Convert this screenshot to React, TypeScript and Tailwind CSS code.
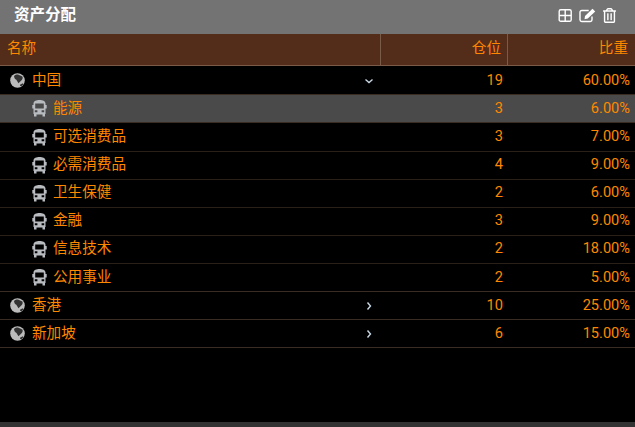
import { FaRegTrashAlt } from "react-icons/fa";

const rows = [
  { type: "group", name: "中国", pos: "19", pct: "60.00%", open: true },
  { type: "leaf", name: "能源", pos: "3", pct: "6.00%", active: true },
  { type: "leaf", name: "可选消费品", pos: "3", pct: "7.00%" },
  { type: "leaf", name: "必需消费品", pos: "4", pct: "9.00%" },
  { type: "leaf", name: "卫生保健", pos: "2", pct: "6.00%" },
  { type: "leaf", name: "金融", pos: "3", pct: "9.00%" },
  { type: "leaf", name: "信息技术", pos: "2", pct: "18.00%" },
  { type: "leaf", name: "公用事业", pos: "2", pct: "5.00%", last: true },
  { type: "group", name: "香港", pos: "10", pct: "25.00%" },
  { type: "group", name: "新加坡", pos: "6", pct: "15.00%" },
];

function Globe() {
  return (
    <svg width="15" height="15" viewBox="0 0 15 15" className="mr-[7px] shrink-0">
      <circle cx="7.500" cy="7.500" r="7.300" fill="#bcbcbc" />
      <path d="M4 3c1.500-1.300 3-1.600 4.500-1.300L12.300 3.500c.8 1.200.3 2.600-.5 3.400L8.500 10.300 6.300 6.800C5 6.300 4.200 5 4 3Z" fill="#333333" />
      <path d="M10 11.800l2.700-1.500.7 1.200-1.900 1.800-1.500-.5Z" fill="#333333" />
    </svg>
  );
}

function Bus() {
  return (
    <svg width="15" height="17" viewBox="0 0 15 17" className="mr-[6px] shrink-0">
      <path
        fillRule="evenodd"
        fill="#b8bcc0"
        d="M1.500 3.500C1.500 1 4.500 0 7.500 0s6 1 6 3.500V5h1.200v3.500h-1.200v5.500H13v2.500H10.500V14.500h-6V16.500H2V14H1.500V8.500H.3V5h1.200V3.500ZM3.200 3.500v5h8.600v-5H3.200ZM2.800 10.200v2h2.600v-2H2.800ZM9.600 10.200v2h2.600v-2H9.600Z"
      />
    </svg>
  );
}

function Chevron({ open }: { open?: boolean }) {
  return (
    <svg width="10" height="10" viewBox="0 0 10 10" fill="none" stroke="#c8d8e4" strokeWidth="1.400">
      <path d={open ? "M1.500 3.500 5 6.500 8.500 3.500" : "M3.500 1.500 6.500 5 3.500 8.500"} />
    </svg>
  );
}

export default function App() {
  return (
    <div className="flex h-[427px] w-[635px] flex-col overflow-hidden bg-black font-['Roboto','Noto_Sans_CJK_SC',sans-serif] text-[14.6px] text-[#ff8800]">
      <div className="flex h-[34px] shrink-0 items-center justify-between bg-[#737373] pb-[4px] pl-[14px] pr-[18px] text-white">
        <span className="pt-[2px] text-[15.500px] font-bold">资产分配</span>
        <div className="flex items-center gap-[6px]">
          <svg width="15" height="15" viewBox="0 0 15 15" fill="none" stroke="white" strokeWidth="1.400">
            <rect x="1.200" y="1.700" width="12" height="11.600" rx="1.600" />
            <path d="M7.200 1.700v11.600M1.200 7.500h12" />
          </svg>
          <svg width="17" height="15" viewBox="0 0 17 15" fill="none">
            <path d="M13 8.500v3.300a1.700 1.700 0 0 1-1.700 1.700H2.700A1.700 1.700 0 0 1 1 11.800V4.200a1.700 1.700 0 0 1 1.700-1.700h7" stroke="white" strokeWidth="1.400" />
            <path d="M6 8 13.500 .8 16.200 3.400 8.800 10.600 5.500 11.200Z" fill="white" />
          </svg>
          <FaRegTrashAlt size={15} />
        </div>
      </div>
      <div className="flex h-[32px] shrink-0 border-b border-[#7a5a48] bg-[#542d1a] leading-[29px]">
        <div className="flex-1 border-r border-[#7a5a48] pl-[7px]">名称</div>
        <div className="w-[127px] border-r border-[#7a5a48] pr-[6px] text-right">仓位</div>
        <div className="w-[127px] pr-[7px] text-right">比重</div>
      </div>
      <div className="flex-1 pt-[1.300px]">
        {rows.map((r) => (
          <div
            key={r.name}
            className={`flex h-[28.1px] items-center border-b ${r.type === "group" || r.last || r.active ? "border-[#3a2c22]" : "border-[#2a2018]"} ${r.active ? "bg-[#4a4a4a]" : ""}`}
          >
            <div className={`flex flex-1 items-center ${r.type === "group" ? "pl-[10px]" : "pl-[32px]"}`}>
              {r.type === "group" ? <Globe /> : <Bus />}
              <span>{r.name}</span>
            </div>
            <div className="flex w-[18px] items-center justify-center">
              {r.type === "group" && <Chevron open={r.open} />}
            </div>
            <div className="w-[130px] pr-[5px] text-right">{r.pos}</div>
            <div className="w-[127px] pr-[5px] text-right">{r.pct}</div>
          </div>
        ))}
      </div>
      <div className="h-[5px] shrink-0 bg-[#333333]" />
    </div>
  );
}
